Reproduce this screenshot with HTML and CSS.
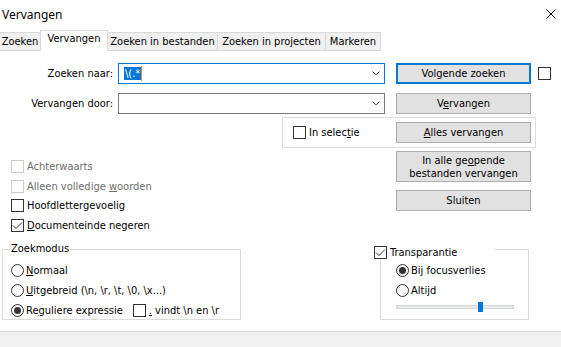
FILE: index.html
```html
<!DOCTYPE html>
<html lang="nl">
<head>
    <meta charset="UTF-8">
    <meta name="viewport" content="width=device-width, initial-scale=1.0">
    <title>Vervangen</title>
    <link rel="stylesheet" href="styles.css">
</head>
<body>

<div class="dialog">
    <div class="titlebar">
        <span class="title">Vervangen</span>
        <svg class="close" width="10" height="10" viewBox="0 0 10 10">
            <path d="M0.5 0.5 L9.5 9.5 M9.5 0.5 L0.5 9.5" stroke="#000" stroke-width="1" fill="none"/>
        </svg>
    </div>

    <div class="tabs">
        <div class="tab t1">Zoeken</div>
        <div class="tab t2 active">Vervangen</div>
        <div class="tab t3">Zoeken in bestanden</div>
        <div class="tab t4">Zoeken in projecten</div>
        <div class="tab t5">Markeren</div>
    </div>

    <div class="page">
        <div class="row row-find">
            <span class="field-label">Zoeken naar:</span>
            <div class="combo focus">
                <span class="sel">\(.*</span><span class="caret"></span>
                <svg class="chevron" width="8" height="5" viewBox="0 0 8 5"><path d="M0.5 0.5 L4 4 L7.5 0.5" stroke="#606060" fill="none"/></svg>
            </div>
            <button class="btn default">Volgende zoeken</button>
            <span class="check side"></span>
        </div>

        <div class="row row-replace">
            <span class="field-label">Vervangen door:</span>
            <div class="combo">
                <svg class="chevron" width="8" height="5" viewBox="0 0 8 5"><path d="M0.5 0.5 L4 4 L7.5 0.5" stroke="#606060" fill="none"/></svg>
            </div>
            <button class="btn">V<u>e</u>rvangen</button>
        </div>

        <div class="selection-box">
            <label class="opt"><span class="check"></span><span>In selec<u>t</u>ie</span></label>
            <button class="btn"><u>A</u>lles vervangen</button>
        </div>

        <div class="middle">
            <div class="options">
                <label class="opt disabled"><span class="check"></span><span>Achterwaarts</span></label>
                <label class="opt disabled"><span class="check"></span><span>Alleen volledige <u>w</u>oorden</span></label>
                <label class="opt"><span class="check"></span><span>Hoofdlettergevoelig</span></label>
                <label class="opt"><span class="check checked"><svg width="11" height="11" viewBox="0 0 11 11"><path d="M1 5.5 L4 8.5 L10 2.5" stroke="#333" fill="none"/></svg></span><span><u>D</u>ocumenteinde negeren</span></label>
            </div>
            <div class="actions">
                <button class="btn tall">In alle ge<u>o</u>pende<br>bestanden vervangen</button>
                <button class="btn">Sluiten</button>
            </div>
        </div>

        <div class="bottom">
            <div class="group mode">
                <span class="group-title">Zoekmodus</span>
                <label class="opt"><span class="radio"></span><span><u>N</u>ormaal</span></label>
                <label class="opt"><span class="radio"></span><span><u>U</u>itgebreid (\n, \r, \t, \0, \x...)</span></label>
                <label class="opt"><span class="radio on"></span><span>Re<u>g</u>uliere expressie</span><span class="check dotall"></span><span><u>.</u> vindt \n en \r</span></label>
            </div>
            <div class="group transp">
                <label class="group-title opt"><span class="check checked"><svg width="11" height="11" viewBox="0 0 11 11"><path d="M1 5.5 L4 8.5 L10 2.5" stroke="#333" fill="none"/></svg></span><span>Transparantie</span></label>
                <label class="opt"><span class="radio on"></span><span>Bij focusverlies</span></label>
                <label class="opt"><span class="radio"></span><span>Altijd</span></label>
                <div class="slider"><div class="track"></div><div class="thumb"></div></div>
            </div>
        </div>
    </div>

    <div class="statusbar"></div>
</div>

</body>
</html>
```

FILE: styles.css
```css
body {
    margin: 0;
    font-family: "DejaVu Sans Condensed", "DejaVu Sans", sans-serif;
    font-size: 11px;
    color: black;
    background-color: white;
}

.dialog {
    width: 561px;
    height: 347px;
    display: flex;
    flex-direction: column;
    overflow: hidden;
}

.titlebar {
    height: 30px;
    display: flex;
    align-items: center;
    justify-content: space-between;
    padding: 0 5px 0 2px;
}

.title {
    font-family: "Noto Sans", sans-serif;
    font-size: 12px;
    margin-top: -2px;
}

.close {
    margin-top: -2px;
}

.tabs {
    height: 21px;
    display: flex;
    align-items: flex-end;
}

.tab {
    box-sizing: border-box;
    height: 19px;
    line-height: 17px;
    text-align: center;
    background-color: #F0F0F0;
    border: 1px solid #D9D9D9;
    margin-left: -1px;
}

.tab.active {
    height: 21px;
    line-height: 15px;
    background-color: white;
    border-bottom-color: white;
    position: relative;
}

.t1 { width: 42px; }
.t2 { width: 68px; }
.t3 { width: 111px; }
.t4 { width: 109px; }
.t5 { width: 56px; }

.page {
    display: flex;
    flex-direction: column;
}

.row {
    display: flex;
    align-items: center;
    height: 21px;
}

.row-find {
    margin-top: 12px;
}

.row-replace {
    margin-top: 9px;
}

.field-label {
    width: 113px;
    margin-right: 5px;
    text-align: right;
}

.combo {
    box-sizing: border-box;
    width: 267px;
    height: 21px;
    margin-right: 11px;
    border: 1px solid #7A7A7A;
    display: flex;
    align-items: center;
    position: relative;
}

.combo.focus {
    border-color: #0078D7;
}

.sel {
    margin-left: 5px;
    padding: 0 1px;
    line-height: 13px;
    background-color: #0078D7;
    color: white;
}

.caret {
    width: 1px;
    height: 15px;
    background-color: #F08A24;
}

.chevron {
    position: absolute;
    right: 4px;
    top: 7px;
}

.btn {
    box-sizing: border-box;
    width: 135px;
    height: 21px;
    padding: 0;
    font-family: inherit;
    font-size: 11px;
    color: black;
    background-color: #E1E1E1;
    border: 1px solid #ADADAD;
}

.btn.default {
    border: 2px solid #0078D7;
}

.btn.tall {
    height: 31px;
    line-height: 13px;
}

.check {
    box-sizing: border-box;
    width: 13px;
    height: 13px;
    flex: none;
    display: inline-flex;
    align-items: center;
    justify-content: center;
    border: 1px solid #333333;
    background-color: white;
    margin-right: 3px;
}

.check.side {
    margin-left: 7px;
}

.radio {
    box-sizing: border-box;
    width: 13px;
    height: 13px;
    flex: none;
    display: inline-flex;
    align-items: center;
    justify-content: center;
    border: 1px solid #333333;
    border-radius: 50%;
    margin-right: 2px;
}

.radio.on::after {
    content: "";
    width: 7px;
    height: 7px;
    border-radius: 50%;
    background-color: #333333;
}

.opt {
    display: flex;
    align-items: center;
    white-space: nowrap;
}

.opt.disabled {
    color: #6D6D6D;
}

.opt.disabled .check {
    border-color: #CCCCCC;
}

.selection-box {
    box-sizing: border-box;
    width: 254px;
    height: 31px;
    margin: 3px 0 0 282px;
    padding-left: 10px;
    border: 1px solid #DCDCDC;
    display: flex;
    align-items: center;
}

.selection-box .btn {
    margin-left: auto;
    margin-right: 4px;
}

.middle {
    height: 98px;
    margin-top: 3px;
    display: flex;
    align-items: flex-start;
}

.options {
    margin-left: 11px;
    padding-top: 6px;
}

.options .opt {
    height: 19.5px;
}

.actions {
    margin-left: auto;
    margin-right: 30px;
    display: flex;
    flex-direction: column;
    gap: 8px;
}

.bottom {
    display: flex;
}

.group {
    box-sizing: border-box;
    height: 71px;
    border: 1px solid #DCDCDC;
    position: relative;
    padding-top: 10px;
}

.group .opt {
    height: 20px;
}

.group.mode {
    width: 239px;
    margin-left: 2px;
    padding-left: 8px;
}

.group.transp {
    width: 149px;
    margin-left: 139px;
    padding-left: 15px;
}

.group-title {
    position: absolute;
    top: -8px;
    left: 7px;
    padding: 0 1px;
    background-color: white;
}

.transp .group-title {
    top: -5px;
    left: -7px;
    width: 120px;
    height: 14px;
    padding: 0;
}

.check.dotall {
    margin-left: 10px;
}

.slider {
    position: relative;
    width: 118px;
    height: 10px;
    margin-top: 2px;
}

.track {
    box-sizing: border-box;
    position: absolute;
    top: 3px;
    left: 0;
    width: 118px;
    height: 4px;
    background-color: #E7EAEA;
    border: 1px solid #D6D6D6;
}

.thumb {
    position: absolute;
    top: 0;
    left: 82px;
    width: 5px;
    height: 10px;
    background-color: #0078D7;
}

.statusbar {
    margin-top: auto;
    height: 15px;
    background-color: #F0F0F0;
    border-top: 1px solid #DADADA;
}
```
